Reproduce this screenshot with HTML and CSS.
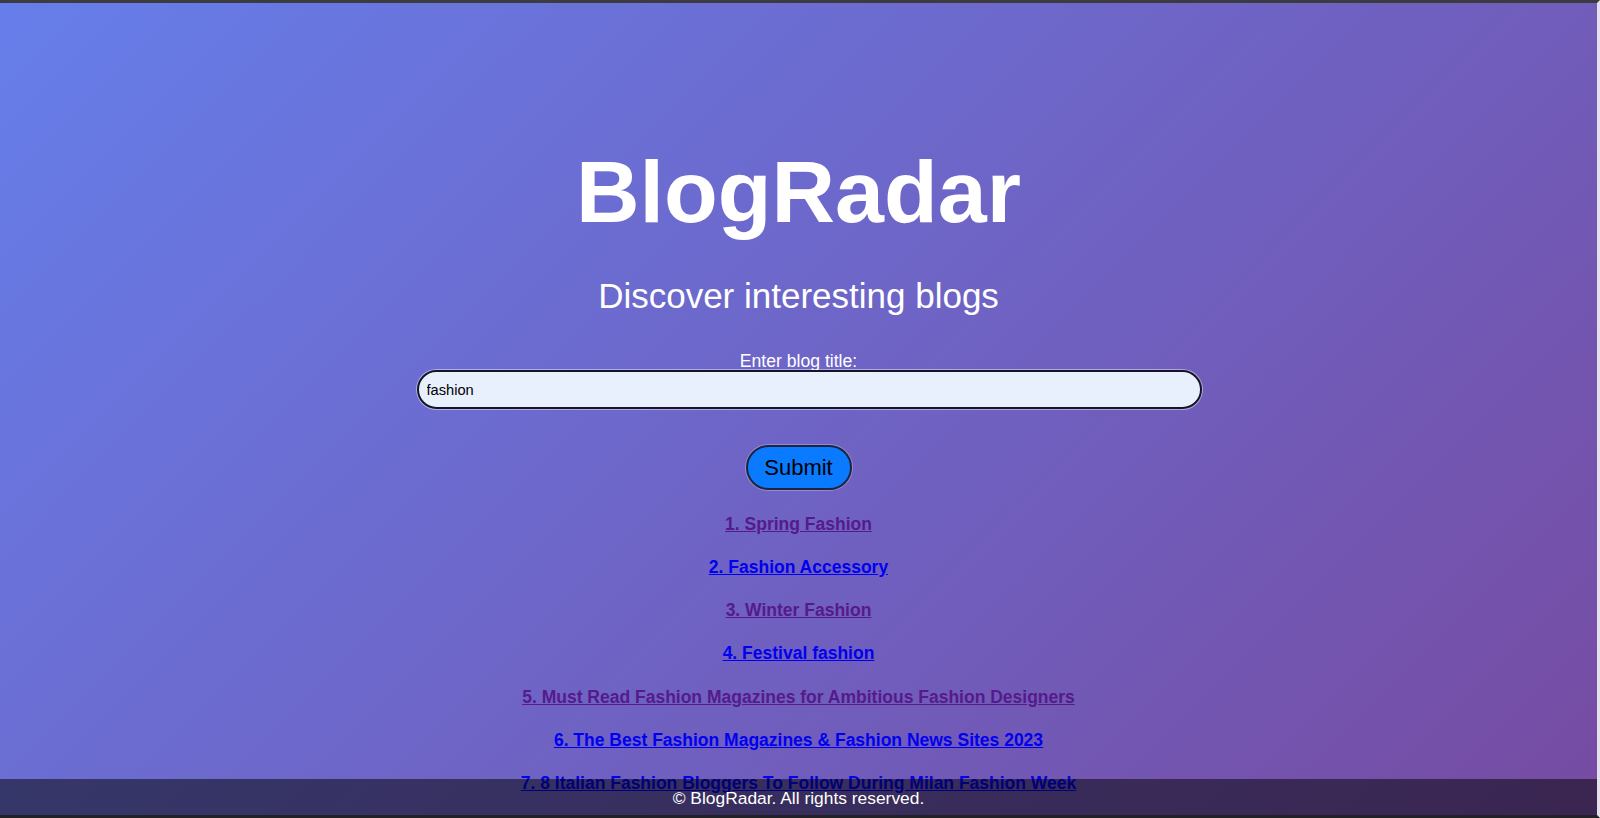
FILE: index.html
```html
<!DOCTYPE html>
<html lang="en">
<head>
<meta charset="utf-8">
<title>BlogRadar</title>
<link rel="stylesheet" href="styles.css">
</head>
<body>
<div class="frame">
  <main class="main">
    <h1 class="title">BlogRadar</h1>
    <h2 class="subtitle">Discover interesting blogs</h2>
    <form class="search">
      <label class="label" for="q">Enter blog title:</label>
      <input class="input" id="q" type="text" value="fashion">
      <button class="submit" type="button">Submit</button>
    </form>
    <ul class="results">
      <li><a class="link visited" href="#">1. Spring Fashion</a></li>
      <li><a class="link" href="#">2. Fashion Accessory</a></li>
      <li><a class="link visited" href="#">3. Winter Fashion</a></li>
      <li><a class="link" href="#">4. Festival fashion</a></li>
      <li><a class="link visited" href="#">5. Must Read Fashion Magazines for Ambitious Fashion Designers</a></li>
      <li><a class="link" href="#">6. The Best Fashion Magazines &amp; Fashion News Sites 2023</a></li>
      <li><a class="link" href="#">7. 8 Italian Fashion Bloggers To Follow During Milan Fashion Week</a></li>
    </ul>
  </main>
  <footer class="footer">© BlogRadar. All rights reserved.</footer>
</div>
</body>
</html>
```

FILE: styles.css
```css
html, body {
  margin: 0;
  padding: 0;
  height: 100%;
  overflow: hidden;
}

body {
  font-family: "Liberation Sans", Arial, sans-serif;
  font-size: 17.6px;
  color: #fff;
}

.frame {
  position: relative;
  box-sizing: border-box;
  height: 818px;
  border-top: 3px solid #3c3c40;
  border-bottom: 3px solid #222226;
  border-right: 3px solid #e4e0ec;
  background: linear-gradient(135deg, #667eea 0%, #764ba2 100%);
  overflow: hidden;
}

.main {
  display: flex;
  flex-direction: column;
  align-items: center;
  padding-top: 138px;
}

.title {
  margin: 0;
  font-size: 88px;
  font-weight: bold;
  line-height: normal;
  color: #fff;
}

.subtitle {
  margin: 33px 0 0;
  font-size: 35px;
  font-weight: normal;
  line-height: normal;
  color: #fff;
}

.search {
  margin-top: 35px;
  display: flex;
  flex-direction: column;
  align-items: center;
}

.label {
  font-size: 17.6px;
  line-height: 20px;
  color: #fff;
}

.input {
  box-sizing: border-box;
  width: 785px;
  height: 39px;
  margin: -1px 0 0 21px;
  padding: 0 8px;
  border: 2px solid #15152a;
  border-radius: 20px;
  background: #e8f0fe;
  box-shadow: 0 0 0 1px rgba(255, 255, 255, 0.45);
  font-family: "Liberation Sans", Arial, sans-serif;
  font-size: 14.67px;
  color: #000;
  outline: none;
}

.submit {
  box-sizing: border-box;
  margin-top: 36px;
  width: 106px;
  height: 45px;
  padding: 0;
  border: 2px solid #1d2440;
  border-radius: 23px;
  background: #0a7bff;
  box-shadow: 0 0 0 1px rgba(255, 255, 255, 0.25);
  font-family: "Liberation Sans", Arial, sans-serif;
  font-size: 22px;
  color: #000;
}

.results {
  list-style: none;
  margin: 23.5px 0 0;
  padding: 0;
  display: flex;
  flex-direction: column;
  align-items: center;
  gap: 23.1px;
}

.results li {
  line-height: 20.2px;
}

.link {
  font-weight: bold;
  font-size: 17.5px;
  color: #0000ee;
  text-decoration: underline;
}

.link.visited {
  color: #551a8b;
}

.footer {
  position: absolute;
  left: 0;
  right: 0;
  bottom: 0;
  height: 36px;
  box-sizing: border-box;
  padding-top: 9px;
  background: rgba(0, 0, 0, 0.5);
  text-align: center;
  font-size: 17.4px;
  line-height: 20px;
  color: #fff;
}
```
